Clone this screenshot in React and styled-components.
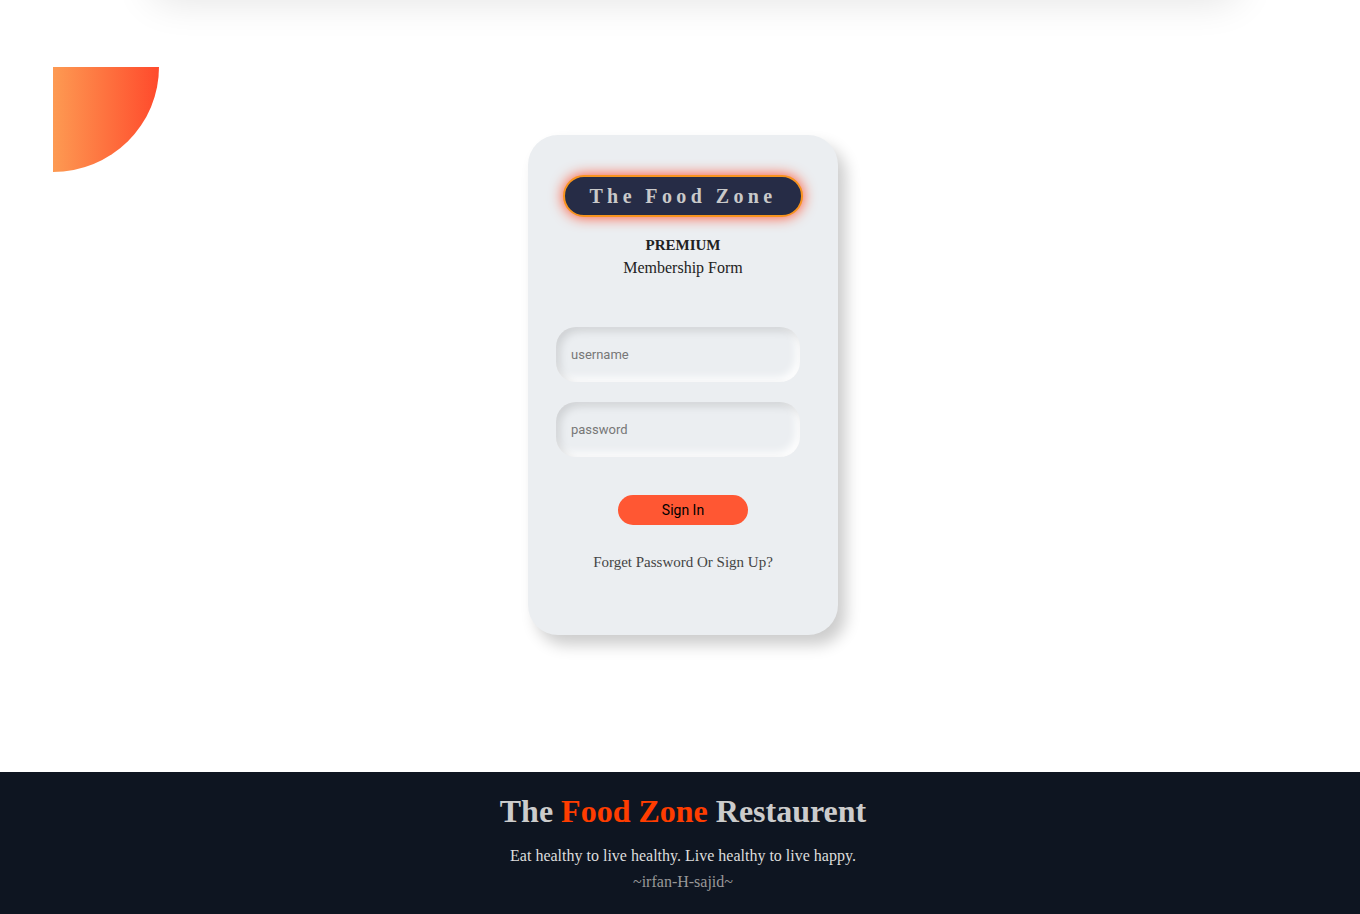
import React from 'react';
import styled, { createGlobalStyle } from 'styled-components';

const GlobalStyle = createGlobalStyle`
    html, body {
        margin: 0;
        padding: 0;
        background: #ffffff;
        font-family: "Liberation Serif", "Times New Roman", serif;
    }
`;

const App = () => {
    return (
        <PageStyled>
            <GlobalStyle />
            <HeaderShadowStyled />
            <BlobStyled />

            <MainStyled>
                <CardStyled>
                    <BrandPillStyled>The Food Zone</BrandPillStyled>
                    <PremiumStyled>PREMIUM</PremiumStyled>
                    <SubtitleStyled>Membership Form</SubtitleStyled>

                    <FormStyled onSubmit={(e) => e.preventDefault()}>
                        <InputStyled type="text" placeholder="username" />
                        <InputStyled type="password" placeholder="password" />
                        <SignInButtonStyled type="submit">Sign In</SignInButtonStyled>
                    </FormStyled>

                    <ForgetLinkStyled>Forget Password Or Sign Up?</ForgetLinkStyled>
                </CardStyled>
            </MainStyled>

            <FooterStyled>
                <FooterTitleStyled>
                    The <AccentStyled>Food Zone</AccentStyled> Restaurent
                </FooterTitleStyled>
                <TaglineStyled>Eat healthy to live healthy. Live healthy to live happy.</TaglineStyled>
                <AuthorStyled>~irfan-H-sajid~</AuthorStyled>
            </FooterStyled>
        </PageStyled>
    );
};

export default App;

const PageStyled = styled.div`
    position: relative;
    min-height: 914px;
    display: flex;
    flex-direction: column;
`;

const HeaderShadowStyled = styled.div`
    position: absolute;
    top: -40px;
    left: 150px;
    right: 120px;
    height: 40px;
    border-radius: 20px;
    box-shadow: 0 0 40px rgba(0, 0, 0, 0.12);
`;

const BlobStyled = styled.div`
    position: absolute;
    top: 67px;
    left: 53px;
    width: 106px;
    height: 105px;
    border-bottom-right-radius: 100%;
    background: linear-gradient(to right, #fd9a52, #ff4a2c);
`;

const MainStyled = styled.main`
    flex: 1;
    display: flex;
    justify-content: center;
    padding: 135px 0 137px 6px;
`;

const CardStyled = styled.div`
    width: 310px;
    height: 500px;
    box-sizing: border-box;
    padding-top: 40px;
    border-radius: 30px;
    background: #ebeef1;
    box-shadow: 8px 10px 15px rgba(0, 0, 0, 0.2);
    display: flex;
    flex-direction: column;
    align-items: center;
`;

const BrandPillStyled = styled.div`
    width: 240px;
    height: 42px;
    box-sizing: border-box;
    border: 2px solid #f7931e;
    border-radius: 21px;
    background: #262c46;
    box-shadow: 0 0 14px #ff4b2b;
    color: #c9c9c9;
    font-size: 20px;
    font-weight: bold;
    letter-spacing: 4.4px;
    display: flex;
    align-items: center;
    justify-content: center;
`;

const PremiumStyled = styled.div`
    margin-top: 19px;
    font-size: 15px;
    font-weight: bold;
    color: #222;
    line-height: 18px;
`;

const SubtitleStyled = styled.div`
    margin-top: 5px;
    font-size: 16px;
    color: #222;
    line-height: 18px;
`;

const FormStyled = styled.form`
    margin-top: 50px;
    align-self: stretch;
    padding-left: 28px;
    display: flex;
    flex-direction: column;
    align-items: flex-start;
    gap: 20px;
`;

const InputStyled = styled.input`
    width: 244px;
    height: 55px;
    box-sizing: border-box;
    border: none;
    outline: none;
    border-radius: 20px;
    padding: 0 15px;
    background: #ebeef1;
    box-shadow: inset 4px 4px 8px rgba(0, 0, 0, 0.12), inset -4px -4px 8px #ffffff;
    font-family: Roboto, "Liberation Sans", sans-serif;
    font-size: 13px;
    color: #333;

    &::placeholder {
        color: #777;
    }
`;

const SignInButtonStyled = styled.button`
    margin-top: 18px;
    margin-left: 62px;
    width: 130px;
    height: 30px;
    border: none;
    border-radius: 15px;
    background: #ff5733;
    color: #000;
    font-family: Roboto, "Liberation Sans", sans-serif;
    font-size: 14px;
    cursor: pointer;
`;

const ForgetLinkStyled = styled.div`
    margin-top: 29px;
    font-size: 15px;
    color: #444;
    cursor: pointer;
`;

const FooterStyled = styled.footer`
    height: 142px;
    box-sizing: border-box;
    background: #0e1521;
    padding: 20px 0 0 6px;
    display: flex;
    flex-direction: column;
    align-items: center;
`;

const FooterTitleStyled = styled.div`
    font-size: 32px;
    font-weight: bold;
    color: #cccccc;
    line-height: 38px;
`;

const AccentStyled = styled.span`
    color: #ff3d00;
`;

const TaglineStyled = styled.div`
    margin-top: 16px;
    font-size: 16px;
    color: #dddddd;
    line-height: 19px;
`;

const AuthorStyled = styled.div`
    margin-top: 7px;
    font-size: 16px;
    color: #999999;
    line-height: 19px;
`;
